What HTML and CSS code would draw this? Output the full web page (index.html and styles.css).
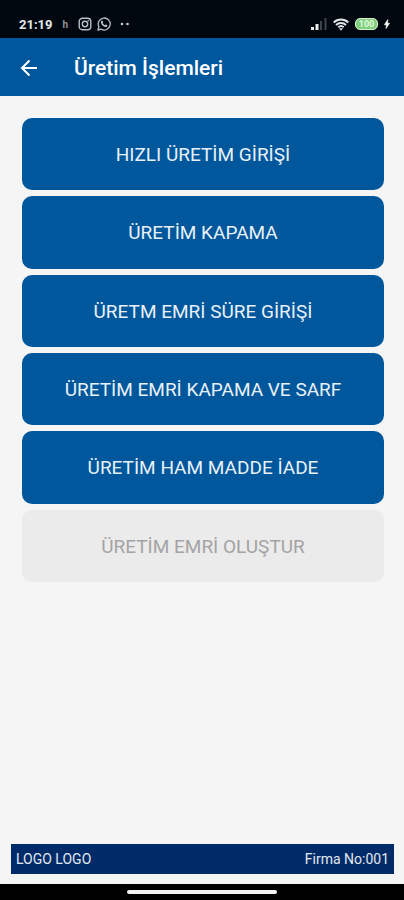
FILE: index.html
```html
<!DOCTYPE html>
<html lang="tr">
<head>
<meta charset="utf-8">
<meta name="viewport" content="width=device-width, initial-scale=1">
<title>Üretim İşlemleri</title>
<link rel="stylesheet" href="styles.css">
</head>
<body>
<div class="screen">
  <div class="status">
    <div class="status-left">
      <span class="time">21:19</span>
      <span class="carrier">h</span>
      <span class="apps">
        <svg width="14" height="14" viewBox="0 0 14 14" fill="none" stroke="#b9c0c4" stroke-width="1.4" aria-hidden="true">
          <rect x="1.2" y="1.2" width="11.6" height="11.6" rx="3.2"/>
          <circle cx="7" cy="7" r="2.7"/>
          <circle cx="10.3" cy="3.7" r=".5" fill="#b9c0c4" stroke-width=".5"/>
        </svg>
        <svg width="14" height="14" viewBox="0 0 14 14" aria-hidden="true">
          <path d="M1 13l.9-3.2A6 6 0 1 1 4.2 12.2z" fill="none" stroke="#b9c0c4" stroke-width="1.3" stroke-linejoin="round"/>
          <path d="M4.500 3.800c.5-.5 1-.3 1.200.2l.4.900c.1.400-.5.900-.5 1.100.5 1 1.300 1.700 2.300 2.200.3.100.8-.8 1.100-.7l1.200.6c.4.300.1 1.200-.4 1.600-1.300 1-3.100 0-4.300-1.200S3.300 5.200 4.500 3.800z" fill="#b9c0c4"/>
        </svg>
      </span>
      <svg width="10" height="4" viewBox="0 0 10 4" fill="#c5cacd" aria-hidden="true"><circle cx="2" cy="2" r="1.3"/><circle cx="7.5" cy="2" r="1.3"/></svg>
    </div>
    <div class="status-right">
      <svg width="16" height="12" viewBox="0 0 16 12" aria-hidden="true">
        <path d="M0 9h3v3H0zM4.5 6h3v6h-3z" fill="#e8ebec"/>
        <path d="M9 3h2v9H9zM13.500 0h2v12h-2z" fill="#3f464b"/>
      </svg>
      <svg width="16" height="13" viewBox="0 0 16 13" fill="none" stroke="#e3e6e8" stroke-width="1.9" aria-hidden="true">
        <path d="M.7 4.500a10.500 10.500 0 0 1 14.600 0M3 7a7.200 7.200 0 0 1 10 0M5.300 9.300a4 4 0 0 1 5.400 0"/>
        <path d="M6 10.200h4L8 12.700z" fill="#e3e6e8" stroke="none"/>
      </svg>
      <span class="battery">100</span>
      <svg width="6" height="10" viewBox="0 0 6 10" fill="#fff" stroke="#fff" stroke-width=".6" aria-hidden="true"><path d="M3.800.5L.4 5.700h2L2 9.500l3.600-5.300H3.500z"/></svg>
    </div>
  </div>
  <header class="bar">
    <button class="back" type="button" aria-label="Geri">
      <svg width="18" height="18" viewBox="0 0 18 18" fill="none" stroke="#fff" stroke-width="2" aria-hidden="true"><path d="M17 9H2M9.500 1.500L2 9l7.500 7.500"/></svg>
    </button>
    <h1>Üretim İşlemleri</h1>
  </header>
  <main class="menu">
    <button type="button">HIZLI ÜRETİM GİRİŞİ</button>
    <button type="button">ÜRETİM KAPAMA</button>
    <button type="button">ÜRETM EMRİ SÜRE GİRİŞİ</button>
    <button type="button">ÜRETİM EMRİ KAPAMA VE SARF</button>
    <button type="button">ÜRETİM HAM MADDE İADE</button>
    <button type="button" disabled>ÜRETİM EMRİ OLUŞTUR</button>
  </main>
  <footer class="company"><span>LOGO LOGO</span><span>Firma No:001</span></footer>
  <div class="nav"><div class="handle"></div></div>
</div>
</body>
</html>
```

FILE: styles.css
```css
* { box-sizing: border-box; }
body {
  margin: 0;
  background: #f5f5f5;
  font-family: Roboto, "Noto Sans", sans-serif;
}
.screen {
  min-height: 100vh;
  display: flex;
  flex-direction: column;
}
.status {
  height: 38px;
  padding: 10px 14px 0 19px;
  display: flex;
  justify-content: space-between;
  align-items: center;
  background: #01070f;
  color: #e6e9eb;
}
.status-left, .status-right { display: flex; align-items: center; }
.time { font-size: 13px; font-weight: 700; }
.carrier {
  margin: 0 10px;
  font-size: 10px;
  font-weight: 700;
  color: #8d9499;
}
.apps { display: flex; gap: 5px; margin-right: 9px; }
.status-right { gap: 6px; }
.battery {
  width: 23px;
  height: 12px;
  border: 1px solid #d5efcf;
  border-radius: 5px;
  background: #7fcf7c;
  color: #e4f8df;
  font-size: 9px;
  font-weight: 700;
  line-height: 10px;
  text-align: center;
}
.bar {
  height: 58px;
  padding: 2px 20px 0;
  display: flex;
  align-items: center;
  gap: 36px;
  background: #00579c;
  color: #fff;
}
.back {
  display: flex;
  padding: 0;
  border: 0;
  background: none;
}
h1 { margin: 0; font-size: 21px; font-weight: 500; line-height: 24px; }
.menu {
  min-height: 464px;
  margin: 22px 20px 0 22px;
  display: grid;
  grid-auto-rows: 1fr;
  gap: 6px;
}
.menu button {
  padding: 2px 16px 0;
  border: 0;
  border-radius: 10px;
  background: #00579c;
  color: #e9f1f8;
  font-family: inherit;
  font-size: 19px;
  line-height: 24px;
}
.menu button:disabled { background: #ebebeb; color: #a3a3a3; }
.company {
  margin: auto 10px 10px 11px;
  height: 30px;
  padding: 0 5px;
  display: flex;
  justify-content: space-between;
  align-items: center;
  background: #002b69;
  color: #e3e9f1;
  font-size: 14px;
}
.nav {
  height: 16px;
  display: flex;
  justify-content: center;
  align-items: center;
  background: #000;
}
.handle {
  width: 37%;
  height: 4px;
  border-radius: 2px;
  background: #f4f4f4;
}
```
